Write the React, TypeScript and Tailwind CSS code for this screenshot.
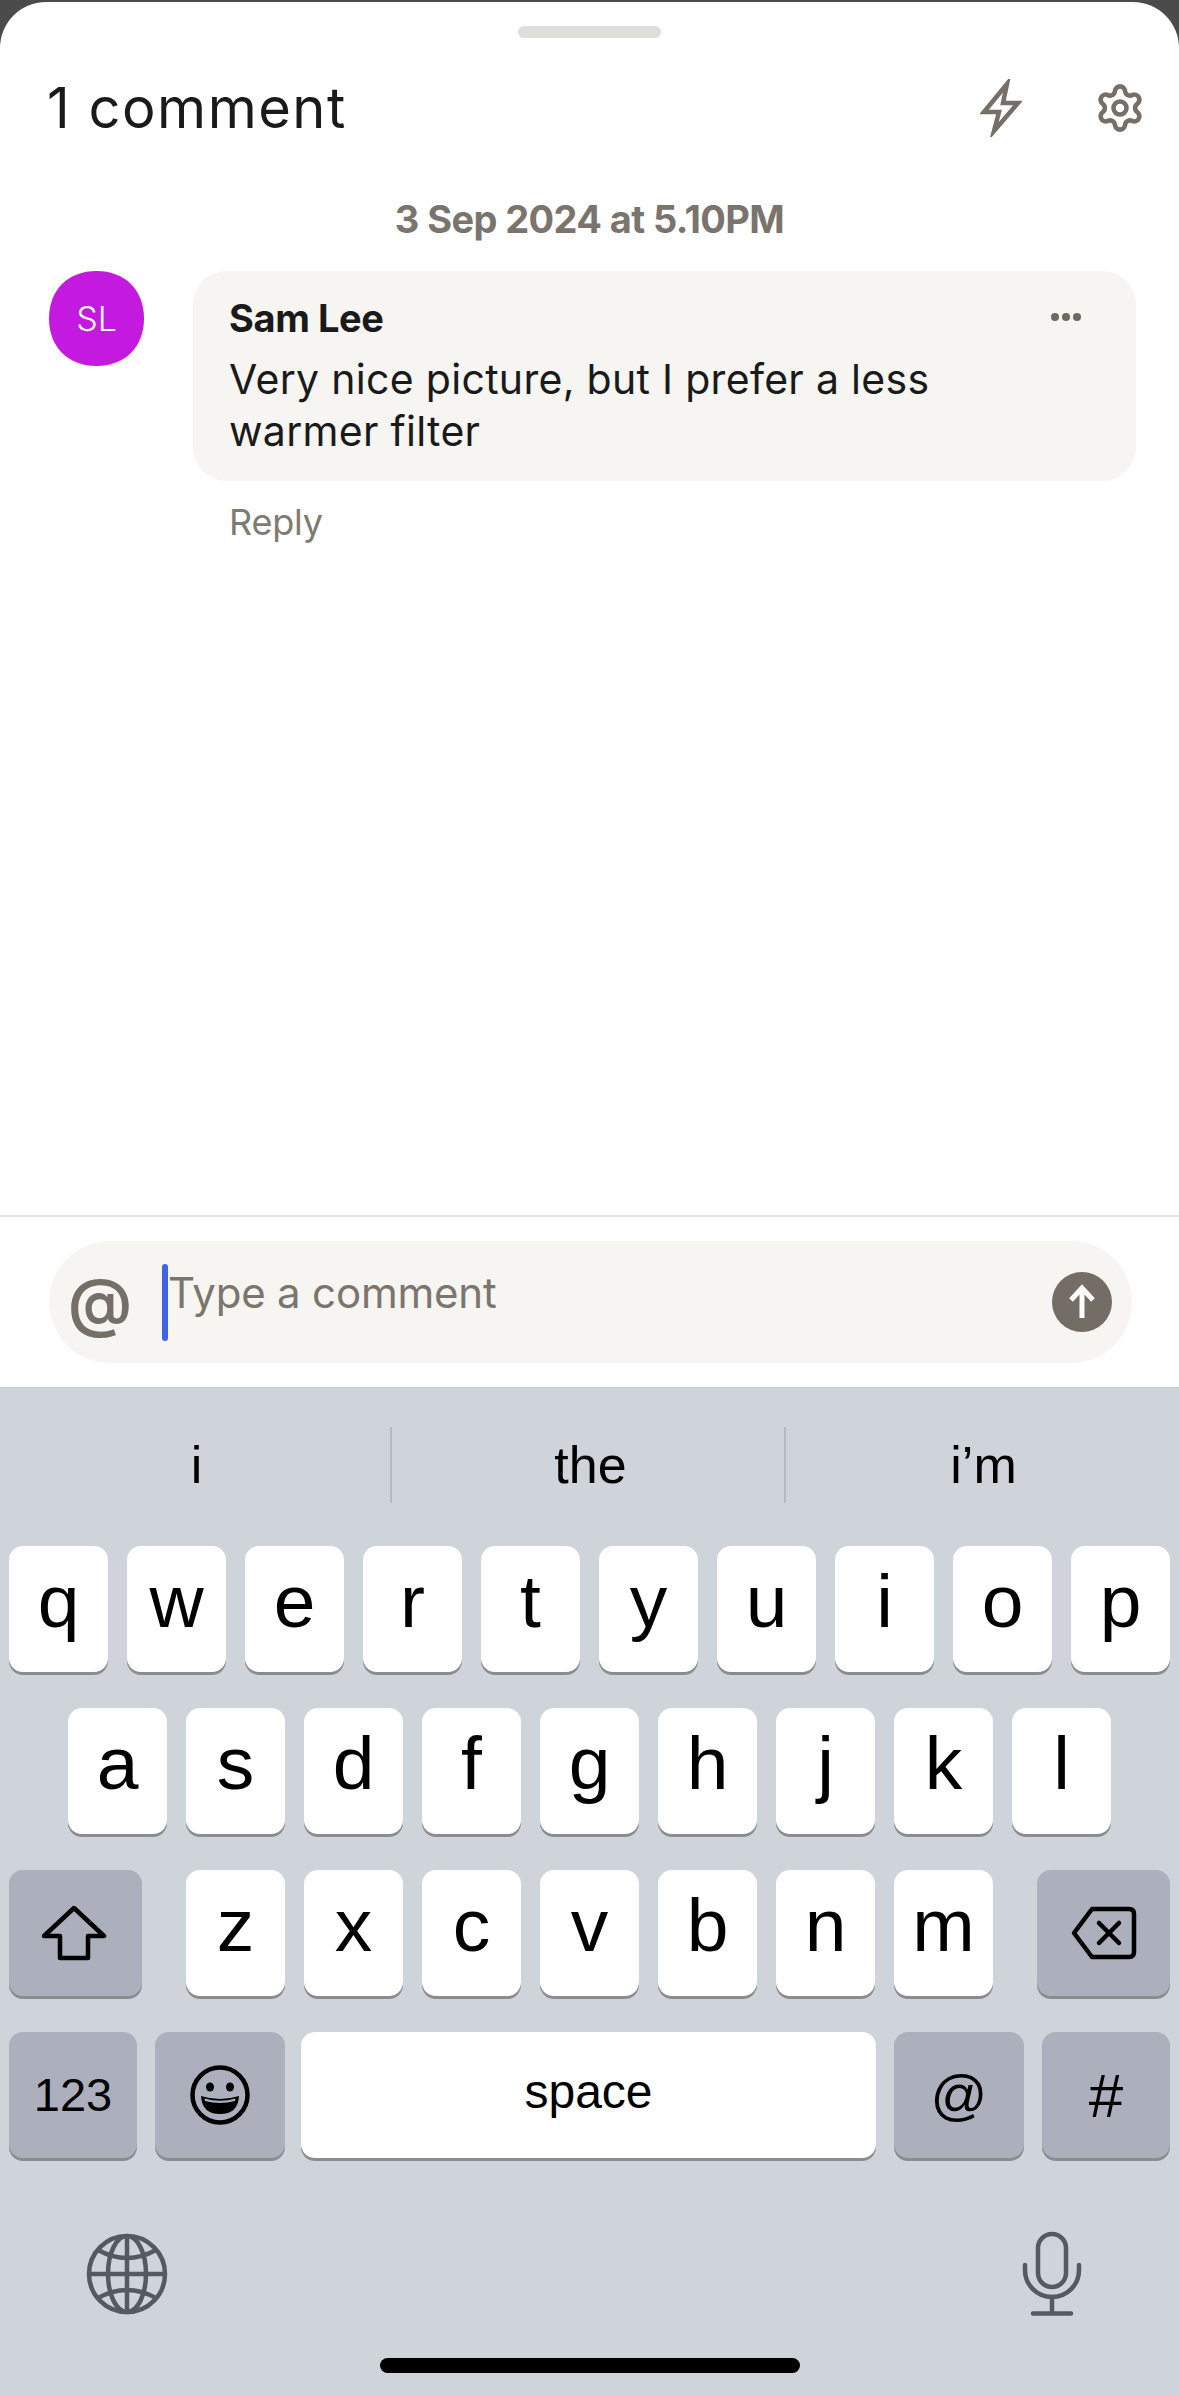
import { Settings } from "lucide-react";

const sans = "font-['Inter','Liberation_Sans',sans-serif]";
const keyFont = "font-['Liberation_Sans','Inter',sans-serif]";

function LetterKey({ label }: { label: string }) {
  return (
    <div className="flex h-[126px] w-[99px] items-center justify-center rounded-[14px] bg-white pb-[15px] text-[75px] leading-none text-black shadow-[0_3px_0_#8b8c90]">
      {label}
    </div>
  );
}

function FnKey({ width, children }: { width: string; children: React.ReactNode }) {
  return (
    <div className={`flex h-[126px] items-center justify-center rounded-[14px] bg-[#abb0bc] text-black shadow-[0_3px_0_#8b8c90] ${width}`}>
      {children}
    </div>
  );
}

function LetterRow({ keys }: { keys: string }) {
  return (
    <div className="flex justify-center gap-[19px]">
      {keys.split("").map((k) => (
        <LetterKey key={k} label={k} />
      ))}
    </div>
  );
}

function ShiftIcon() {
  return (
    <svg className="-ml-[3px]" width="66" height="56" viewBox="0 0 66 56" fill="none" stroke="#000" strokeWidth="4.5" strokeLinejoin="round">
      <path d="M33 3 L63 31 H47 V53 H19 V31 H3 Z" />
    </svg>
  );
}

function BackspaceIcon() {
  return (
    <svg width="66" height="54" viewBox="0 0 66 54" fill="none" stroke="#000" strokeWidth="4.5" strokeLinejoin="round" strokeLinecap="round">
      <path d="M21 3 H58 Q63 3 63 8 V46 Q63 51 58 51 H21 L3 27 Z" />
      <path d="M28 17 L48 37 M48 17 L28 37" />
    </svg>
  );
}

function EmojiIcon() {
  return (
    <svg width="62" height="62" viewBox="0 0 62 62">
      <circle cx="31" cy="31" r="27.5" fill="none" stroke="#000" strokeWidth="4.5" />
      <ellipse cx="21" cy="23" rx="4" ry="4.5" fill="#000" />
      <ellipse cx="41" cy="23" rx="4" ry="4.5" fill="#000" />
      <path d="M12 32 Q31 38 50 32 Q49 50 31 50 Q13 50 12 32 Z" fill="#000" />
      <path d="M15.5 34.5 Q31 39 46.5 34.5 L46 37 Q31 41 16 37 Z" fill="#abb0bc" />
    </svg>
  );
}

function GlobeIcon() {
  return (
    <svg width="82" height="82" viewBox="0 0 82 82" fill="none" stroke="#555a61" strokeWidth="4.5">
      <circle cx="41" cy="41" r="38" />
      <ellipse cx="41" cy="41" rx="19" ry="38" />
      <path d="M41 3 V79 M3 41 H79" />
      <path d="M12 17 Q41 33 70 17 M12 65 Q41 49 70 65" />
    </svg>
  );
}

function MicIcon() {
  return (
    <svg width="60" height="86" viewBox="0 0 60 86" fill="none" stroke="#555a61" strokeWidth="4.5" strokeLinecap="round">
      <rect x="16" y="3" width="28" height="53" rx="14" />
      <path d="M3 34 V39 C3 54 15 66 30 66 C45 66 57 54 57 39 V34" />
      <path d="M30 66 V82 M11 82.5 H49" />
    </svg>
  );
}

function BoltIcon() {
  return (
    <svg width="42" height="58" viewBox="0 0 42 58" fill="none" stroke="#756f67" strokeWidth="4.5" strokeLinejoin="miter" strokeMiterlimit="10">
      <path d="M27 5 L4 33 H19 L14 52 L38 24 H23 Z" />
    </svg>
  );
}

function Avatar() {
  return (
    <div className="grid h-[95px] w-[95px] shrink-0 place-items-center">
      <svg className="col-start-1 row-start-1" width="95" height="95" viewBox="0 0 95 95" fill="#c41ae0">
        <path d="M47.5 0 C76 0 95 19 95 47.5 C95 76 76 95 47.5 95 C19 95 0 76 0 47.5 C0 19 19 0 47.5 0 Z" />
      </svg>
      <span className="col-start-1 row-start-1 text-[34px] font-light leading-none text-white">SL</span>
    </div>
  );
}

export default function App() {
  return (
    <div className={`flex h-[2396px] w-[1179px] flex-col overflow-hidden bg-[#4b4b4b] pt-[2px] ${sans}`}>
      {/* Comments sheet */}
      <div className="flex flex-1 flex-col rounded-t-[46px] bg-white">
        <div className="mx-auto mt-[24px] h-[12px] w-[143px] rounded-[6px] bg-[#e0deda]" />

        <header className="mt-[40px] flex h-[60px] items-center justify-between pl-[47px] pr-[33px]">
          <h1 className="text-[56px] font-normal leading-none tracking-[1.5px] text-[#1a1a1a]">1 comment</h1>
          <div className="flex items-center gap-[72px]">
            <BoltIcon />
            <Settings size={52} strokeWidth={2.1} color="#756f67" />
          </div>
        </header>

        <p className="mt-[59px] text-center text-[38px] font-bold leading-[44px] tracking-[-0.6px] text-[#7a746c]">
          3 Sep 2024 at 5.10PM
        </p>

        <section className="mt-[30px] flex pl-[49px] pr-[43px]">
          <Avatar />
          <div className="ml-[49px] flex-1">
            <div className="relative rounded-[34px] bg-[#f6f5f2] pb-[24px] pl-[36px] pr-[36px] pt-[23px]">
              <div className="text-[38px] font-bold leading-[48px] tracking-[-0.4px] text-[#1a1a1a]">Sam Lee</div>
              <p className="mt-[11px] w-[760px] text-[41px] leading-[52px] tracking-[0.3px] text-[#1a1a1a]">
                Very nice picture, but I prefer a less warmer filter
              </p>
              <svg className="absolute right-[54px] top-[41px]" width="32" height="10" viewBox="0 0 32 10" fill="#6f6962">
                <circle cx="5" cy="5" r="4" />
                <circle cx="16" cy="5" r="4" />
                <circle cx="27" cy="5" r="4" />
              </svg>
            </div>
            <div className="ml-[36px] mt-[19px] text-[36px] leading-[44px] tracking-[-0.2px] text-[#7f7a72]">Reply</div>
          </div>
        </section>

        {/* Composer */}
        <div className="mt-auto h-[172px] border-t-2 border-[#e6e4e1] pl-[49px] pr-[47px] pt-[24px]">
          <div className="flex h-[122px] items-center rounded-[61px] bg-[#f6f5f2] pl-[19px] pr-[20px]">
            <span className="w-[64px] text-center text-[64px] font-semibold leading-none text-[#756f67]">@</span>
            <span className="ml-[30px] h-[77px] w-[6px] rounded-full bg-[#3f63e8]" />
            <span className="flex-1 pb-[18px] text-[42px] leading-none tracking-[-0.2px] text-[#7b756d]">Type a comment</span>
            <span className="flex h-[60px] w-[60px] items-center justify-center rounded-full bg-[#736d65]">
              <svg width="32" height="36" viewBox="0 0 32 36" fill="none" stroke="#fff" strokeWidth="5">
                <path d="M16 34 V4 M5 16 L16 4 L27 16" />
              </svg>
            </span>
          </div>
        </div>
      </div>

      {/* Keyboard */}
      <div className={`h-[1009px] shrink-0 border-t border-[#c6c9d0] bg-[#cfd3da] ${keyFont}`}>
        <div className="flex h-[158px] items-start pt-[39px] text-center text-[52px] text-black">
          <div className="flex h-[76px] w-[392px] items-center justify-center border-r-2 border-[#b6b9c1] pl-[3px]">i</div>
          <div className="flex h-[76px] w-[392px] items-center justify-center pl-[5px]">the</div>
          <div className="flex h-[76px] flex-1 items-center justify-center border-l-2 border-[#b6b9c1] pl-[2px]">i’m</div>
        </div>

        <div className="flex flex-col gap-[36px]">
          <LetterRow keys="qwertyuiop" />
          <LetterRow keys="asdfghjkl" />
          <div className="flex justify-between px-[9px]">
            <FnKey width="w-[133px]"><ShiftIcon /></FnKey>
            <div className="flex gap-[19px]">
              {"zxcvbnm".split("").map((k) => (
                <LetterKey key={k} label={k} />
              ))}
            </div>
            <FnKey width="w-[133px]"><BackspaceIcon /></FnKey>
          </div>
          <div className="flex px-[9px] text-[47px] text-black">
            <FnKey width="w-[128px]">123</FnKey>
            <FnKey width="w-[130px] ml-[18px]"><EmojiIcon /></FnKey>
            <div className="ml-[16px] flex h-[126px] w-[575px] items-center justify-center rounded-[14px] bg-white pb-[6px] text-[48px] shadow-[0_3px_0_#8b8c90]">space</div>
            <FnKey width="w-[130px] ml-[18px] text-[56px]">@</FnKey>
            <FnKey width="w-[128px] ml-[18px] text-[62px]">#</FnKey>
          </div>
        </div>

        <div className="mt-[73px] flex items-center justify-between pl-[86px] pr-[97px]">
          <GlobeIcon />
          <MicIcon />
        </div>
        <div className="mx-auto mt-[41px] h-[15px] w-[420px] rounded-full bg-black" />
      </div>
    </div>
  );
}
